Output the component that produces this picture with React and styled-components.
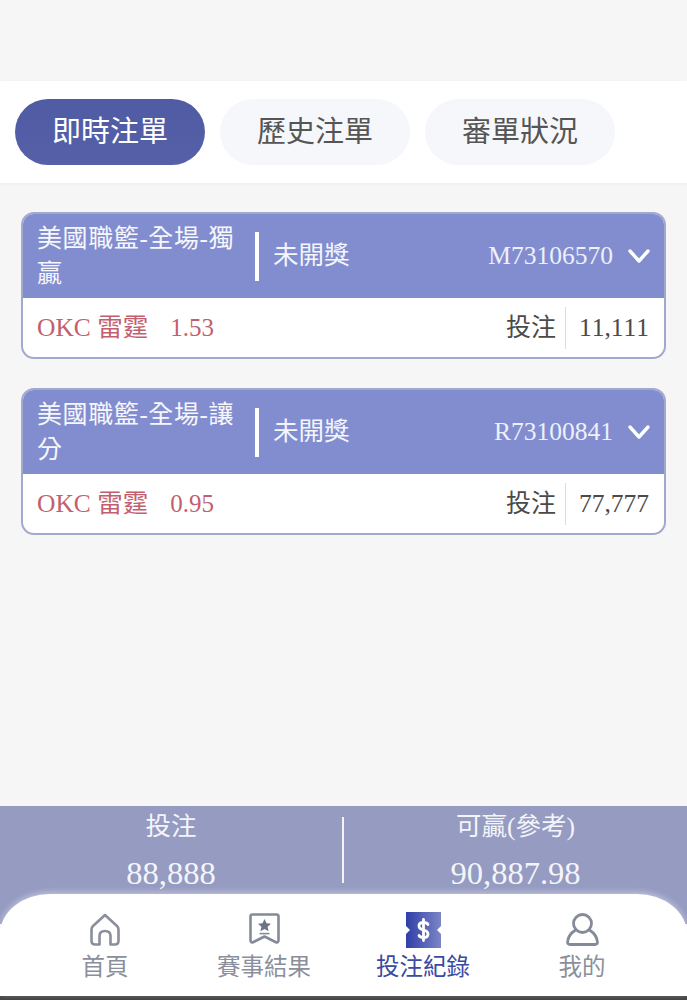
import React from "react";
import styled, { createGlobalStyle } from "styled-components";

const GlobalStyle = createGlobalStyle`
  html, body {
    margin: 0;
    padding: 0;
    background: #f6f6f6;
  }
  * {
    box-sizing: border-box;
  }
`;

const Page = styled.div`
  width: 687px;
  height: 1000px;
  display: flex;
  flex-direction: column;
  overflow: hidden;
  background: #f6f6f6;
  font-family: "Liberation Serif", "Noto Sans CJK TC", serif;
  font-kerning: none;
`;

const TabBar = styled.div`
  margin-top: 81px;
  height: 102px;
  padding: 18px 15px;
  display: flex;
  gap: 15px;
  background: #fff;
  box-shadow: 0 1px 4px rgba(0, 0, 0, 0.05);
`;

const Tab = styled.div`
  width: 190px;
  height: 66px;
  padding-bottom: 6px;
  border-radius: 33px;
  display: flex;
  align-items: center;
  justify-content: center;
  font-size: 29px;
  color: ${(p) => (p.$active ? "#fff" : "#555")};
  background: ${(p) => (p.$active ? "linear-gradient(180deg, #4f5ba3, #5560a8)" : "#f6f7fb")};
`;

const List = styled.div`
  flex: 1;
  padding: 29px 21px 0;
  display: flex;
  flex-direction: column;
  gap: 29px;
`;

const Card = styled.div`
  width: 645px;
  height: 147px;
  border: 2px solid #a3a8cd;
  border-radius: 13px;
  overflow: hidden;
  background: #fff;
`;

const CardHead = styled.div`
  height: 84px;
  padding: 0 13px 0 14px;
  display: flex;
  align-items: center;
  background: #828dd0;
  color: #fff;
`;

const League = styled.div`
  width: 218px;
  padding-right: 17px;
  font-size: 25px;
  line-height: 35px;
  letter-spacing: 0.6px;
  color: #f6f7fc;
`;

const Divider = styled.div`
  width: 4px;
  height: 49px;
  margin-right: 14px;
  background: #fff;
`;

const Status = styled.div`
  padding-bottom: 8px;
  font-size: 25.5px;
  color: #f4f5fb;
`;

const OrderNo = styled.div`
  margin-left: auto;
  margin-right: 14px;
  font-size: 25.5px;
  color: #eef0fa;
`;

const CardBody = styled.div`
  height: 59px;
  padding: 0 15px 0 14px;
  display: flex;
  align-items: center;
`;

const Pick = styled.div`
  padding-bottom: 6px;
  font-size: 25.5px;
  color: #c25f6f;
`;

const Odds = styled.span`
  margin-left: 22px;
  font-size: 25px;
`;

const StakeLabel = styled.div`
  margin-left: auto;
  padding-right: 9px;
  padding-bottom: 6px;
  font-size: 25px;
  color: #4a4a4a;
`;

const StakeValue = styled.div`
  width: 84px;
  height: 42px;
  display: flex;
  align-items: center;
  justify-content: flex-end;
  border-left: 1px solid #dcdcdc;
  font-size: 25.5px;
  color: #4a4a4a;
`;

const Summary = styled.div`
  height: 118px;
  padding-top: 11px;
  display: grid;
  grid-template-columns: 344px 1fr;
  background: #959bc1;
  color: #fff;
`;

const SummaryCell = styled.div`
  height: 66px;
  display: flex;
  flex-direction: column;
  align-items: center;
  border-right: ${(p) => (p.$divided ? "2px solid #f2f3f9" : "none")};
`;

const SummaryLabel = styled.div`
  margin-top: -4px;
  font-size: 25.5px;
  line-height: 28px;
  color: #f4f5fa;
`;

const SummaryValue = styled.div`
  margin-top: 13px;
  font-size: 32.5px;
  line-height: 38px;
  color: #f4f5fa;
`;

const Nav = styled.div`
  position: relative;
  height: 102px;
  margin-top: -30px;
  padding-top: 18px;
  display: grid;
  grid-template-columns: repeat(4, 159px);
  justify-content: center;
  background: #fff;
  border-radius: 50px 50px 0 0 / 40px 40px 0 0;
  box-shadow: 0 -2px 6px rgba(255, 255, 255, 0.4);
`;

const NavItem = styled.div`
  display: flex;
  flex-direction: column;
  align-items: center;
  font-size: 23.5px;
  line-height: 30px;
  color: ${(p) => (p.$active ? "#3b4aa2" : "#8b8f9c")};
`;

const IconSlot = styled.div`
  height: 40px;
  display: flex;
  align-items: flex-start;
  justify-content: center;
`;

const NavIcon = styled.svg`
  display: block;
  width: ${(p) => p.$w}px;
  height: ${(p) => p.$h}px;
  margin-top: ${(p) => p.$top || 0}px;
`;

const BottomStrip = styled.div`
  height: 4px;
  background: #454545;
`;

const HomeIcon = () => (
  <NavIcon $w={30} $h={33} $top={1} viewBox="0 0 30 33" fill="none" stroke="#8b8f9c" strokeWidth="2.6" strokeLinejoin="round" strokeLinecap="round">
    <path d="M15 2 L27 13 Q28.5 14.5 28.5 16.5 L28.5 28 Q28.5 31.5 25 31.5 L20.5 31.5 L20.5 23 Q20.5 18 15 18 Q9.5 18 9.5 23 L9.5 31.5 L5 31.5 Q1.5 31.5 1.5 28 L1.5 16.5 Q1.5 14.5 3 13 Z" />
  </NavIcon>
);

const ResultIcon = () => (
  <NavIcon $w={31} $h={32} $top={1} viewBox="0 0 31 32" fill="none" stroke="#858a99" strokeWidth="2.6" strokeLinejoin="round">
    <path d="M3.5 1.5 L27.5 1.5 Q29.5 1.5 29.5 3.5 L29.5 27 Q29.5 30.5 26.5 29 L15.5 23.5 L4.5 29 Q1.5 30.5 1.5 27 L1.5 3.5 Q1.5 1.5 3.5 1.5 Z" />
    <path d="M15.5 6 L17.5 10.2 L22 10.7 L18.6 13.7 L19.6 18.2 L15.5 15.9 L11.4 18.2 L12.4 13.7 L9 10.7 L13.5 10.2 Z" fill="#6e7488" stroke="none" />
    <path d="M10.5 20.6 L20.5 20.6" strokeWidth="1.6" />
  </NavIcon>
);

const BetIcon = () => (
  <NavIcon $w={35} $h={36} viewBox="0 0 35 36">
    <defs>
      <linearGradient id="ticket" x1="0" y1="0" x2="1" y2="0">
        <stop offset="0" stopColor="#2f3fa8" />
        <stop offset="1" stopColor="#7c85c6" />
      </linearGradient>
    </defs>
    <path
      d="M0 0 L35 0 L35 14 L31 18 L35 22 L35 36 L0 36 L0 22 L4 18 L0 14 Z"
      fill="url(#ticket)"
    />
    <path
      d="M22 12.5 Q21 10.5 17.5 10.5 Q13 10.5 13 13.8 Q13 17 17.5 18 Q22 19 22 22.2 Q22 25.5 17.5 25.5 Q14 25.5 13 23.5 M17.5 7.5 L17.5 28.5"
      fill="none"
      stroke="#fff"
      strokeWidth="2.8"
      strokeLinecap="round"
    />
  </NavIcon>
);

const UserIcon = () => (
  <NavIcon $w={33} $h={33} $top={1} viewBox="0 0 33 33" fill="none" stroke="#858a99" strokeWidth="2.8" strokeLinejoin="round">
    <ellipse cx="16.5" cy="10.5" rx="9" ry="9" />
    <path d="M9.5 17 Q2 22 1.6 29 Q1.5 31.5 4 31.5 L29 31.5 Q31.5 31.5 31.4 29 Q31 22 23.5 17" />
  </NavIcon>
);

const ChevronIcon = styled.svg`
  display: block;
  width: 24px;
  height: 16px;
`;

const Chevron = () => (
  <ChevronIcon viewBox="0 0 24 16" fill="none" stroke="#fff" strokeWidth="3.4" strokeLinecap="round" strokeLinejoin="round">
    <path d="M3 3 L12 13 L21 3" />
  </ChevronIcon>
);

const orders = [
  { league: "美國職籃-全場-獨贏", no: "M73106570", odds: "1.53", stake: "11,111" },
  { league: "美國職籃-全場-讓分", no: "R73100841", odds: "0.95", stake: "77,777" },
];

const navItems = [
  { label: "首頁", Icon: HomeIcon },
  { label: "賽事結果", Icon: ResultIcon },
  { label: "投注紀錄", Icon: BetIcon, active: true },
  { label: "我的", Icon: UserIcon },
];

const App = () => {
  return (
    <Page>
      <GlobalStyle />
      <TabBar>
        <Tab $active>即時注單</Tab>
        <Tab>歷史注單</Tab>
        <Tab>審單狀況</Tab>
      </TabBar>
      <List>
        {orders.map((order) => (
          <Card key={order.no}>
            <CardHead>
              <League>{order.league}</League>
              <Divider />
              <Status>未開獎</Status>
              <OrderNo>{order.no}</OrderNo>
              <Chevron />
            </CardHead>
            <CardBody>
              <Pick>
                OKC 雷霆<Odds>{order.odds}</Odds>
              </Pick>
              <StakeLabel>投注</StakeLabel>
              <StakeValue>{order.stake}</StakeValue>
            </CardBody>
          </Card>
        ))}
      </List>
      <Summary>
        <SummaryCell $divided>
          <SummaryLabel>投注</SummaryLabel>
          <SummaryValue>88,888</SummaryValue>
        </SummaryCell>
        <SummaryCell>
          <SummaryLabel>可贏(參考)</SummaryLabel>
          <SummaryValue>90,887.98</SummaryValue>
        </SummaryCell>
      </Summary>
      <Nav>
        {navItems.map(({ label, Icon, active }) => (
          <NavItem key={label} $active={active}>
            <IconSlot>
              <Icon />
            </IconSlot>
            {label}
          </NavItem>
        ))}
      </Nav>
      <BottomStrip />
    </Page>
  );
};

export default App;
